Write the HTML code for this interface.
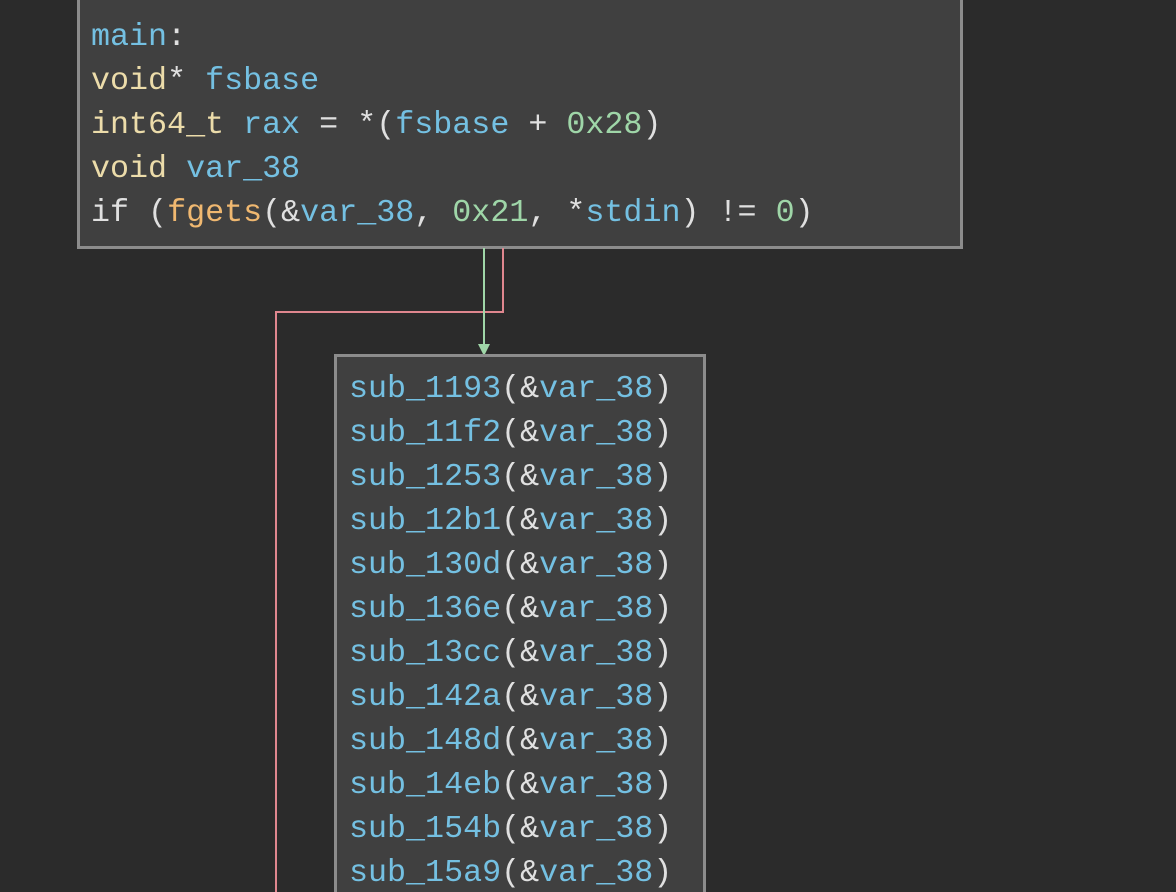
<!DOCTYPE html>
<html style="overflow:hidden;width:1176px;height:892px"><head><style>
body{margin:0;width:1176px;height:892px;background:#2b2b2b;overflow:hidden;position:relative;font-family:"Liberation Mono",monospace;font-size:31.7px;color:#e0e0e0}
.box{position:absolute;background:#404040;border:3px solid #8c8c8c;box-sizing:border-box}
.l{position:absolute;white-space:pre;line-height:44px;height:44px}
.b{color:#74c0e2}.y{color:#ecdcaa}.o{color:#f0b870}.g{color:#9fd6a8}
</style></head><body>
<div class="box" style="left:77px;top:-10px;width:886px;height:259px"></div>
<div class="l" style="left:91px;top:15px"><span class="b">main</span>:</div>
<div class="l" style="left:91px;top:59px"><span class="y">void</span>* <span class="b">fsbase</span></div>
<div class="l" style="left:91px;top:103px"><span class="y">int64_t</span> <span class="b">rax</span> = *(<span class="b">fsbase</span> + <span class="g">0x28</span>)</div>
<div class="l" style="left:91px;top:147px"><span class="y">void</span> <span class="b">var_38</span></div>
<div class="l" style="left:91px;top:191px">if (<span class="o">fgets</span>(&amp;<span class="b">var_38</span>, <span class="g">0x21</span>, *<span class="b">stdin</span>) != <span class="g">0</span>)</div>
<svg style="position:absolute;left:0;top:0" width="1176" height="892">
<polyline points="503,248 503,312 276,312 276,892" fill="none" stroke="#e0878f" stroke-width="2"/>
<line x1="484" y1="248" x2="484" y2="346" stroke="#9fd6a8" stroke-width="2"/>
<polygon points="478,344 490,344 484,356" fill="#9fd6a8"/>
</svg>
<div class="box" style="left:334px;top:354px;width:372px;height:550px"></div>
<div class="l" style="left:349px;top:367px"><span class="b">sub_1193</span>(&amp;<span class="b">var_38</span>)</div>
<div class="l" style="left:349px;top:411px"><span class="b">sub_11f2</span>(&amp;<span class="b">var_38</span>)</div>
<div class="l" style="left:349px;top:455px"><span class="b">sub_1253</span>(&amp;<span class="b">var_38</span>)</div>
<div class="l" style="left:349px;top:499px"><span class="b">sub_12b1</span>(&amp;<span class="b">var_38</span>)</div>
<div class="l" style="left:349px;top:543px"><span class="b">sub_130d</span>(&amp;<span class="b">var_38</span>)</div>
<div class="l" style="left:349px;top:587px"><span class="b">sub_136e</span>(&amp;<span class="b">var_38</span>)</div>
<div class="l" style="left:349px;top:631px"><span class="b">sub_13cc</span>(&amp;<span class="b">var_38</span>)</div>
<div class="l" style="left:349px;top:675px"><span class="b">sub_142a</span>(&amp;<span class="b">var_38</span>)</div>
<div class="l" style="left:349px;top:719px"><span class="b">sub_148d</span>(&amp;<span class="b">var_38</span>)</div>
<div class="l" style="left:349px;top:763px"><span class="b">sub_14eb</span>(&amp;<span class="b">var_38</span>)</div>
<div class="l" style="left:349px;top:807px"><span class="b">sub_154b</span>(&amp;<span class="b">var_38</span>)</div>
<div class="l" style="left:349px;top:851px;height:41px;overflow:hidden"><span class="b">sub_15a9</span>(&amp;<span class="b">var_38</span>)</div>
</body></html>
